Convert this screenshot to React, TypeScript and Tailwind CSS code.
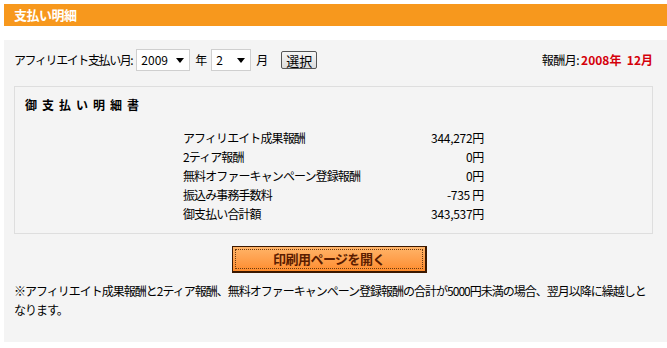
import React from "react";

const font = { fontFamily: '"Noto Sans CJK JP", "Noto Sans", sans-serif' };

function Arrow() {
  return (
    <svg width="8" height="5" viewBox="0 0 8 5" className="block">
      <polygon points="0,0 8,0 4,5" fill="#000" />
    </svg>
  );
}

function FakeSelect({ value, width }: { value: string; width: string }) {
  return (
    <div
      className={`${width} h-[22px] bg-white border border-[#cfcfcf] flex items-center justify-between pl-[4px] pr-[5px] text-[12px] text-black leading-none`}
    >
      <span>{value}</span>
      <Arrow />
    </div>
  );
}

const rows: [string, string][] = [
  ["アフィリエイト成果報酬", "344,272円"],
  ["2ティア報酬", "0円"],
  ["無料オファーキャンペーン登録報酬", "0円"],
  ["振込み事務手数料", "-735 円"],
  ["御支払い合計額", "343,537円"],
];

export default function App() {
  return (
    <div style={font} className="w-[667px] h-[348px] bg-white pt-[4px] pl-[4px] overflow-hidden text-black">
      <div className="h-[22px] bg-[#f7981d] pl-[10px] flex items-center text-white font-bold text-[13px] tracking-[-0.5px]">
        支払い明細
      </div>
      <div className="mt-[14px] h-[302px] bg-[#f4f4f4] pl-[10px] pr-[14px] pt-[9px]">
        <div className="h-[22px] flex items-center justify-between text-[12px]">
          <div className="flex items-center">
            <span className="tracking-[-1.4px]">アフィリエイト支払い月:</span>
            <div className="ml-[4px]">
              <FakeSelect value="2009" width="w-[54px]" />
            </div>
            <span className="ml-[5px]">年</span>
            <div className="ml-[4px]">
              <FakeSelect value="2" width="w-[40px]" />
            </div>
            <span className="ml-[5px]">月</span>
            <button className="ml-[13px] w-[36px] h-[18px] border border-[#555] rounded-[2px] bg-gradient-to-b from-[#f6f6f6] to-[#dcdcdc] text-[13px] leading-none flex items-center justify-center">
              選択
            </button>
          </div>
          <div className="text-[12px] flex items-center">
            <span className="tracking-[-0.5px]">報酬月:</span>
            <span className="text-[#d4000b] font-bold ml-[2px] whitespace-pre">2008年  12月</span>
          </div>
        </div>

        <div className="mt-[15px] h-[148px] border border-[#dedede] pt-[10px] pl-[10px] pb-[9px]">
          <div className="h-[16px] flex items-center font-bold text-[12px] tracking-[5px]">御支払い明細書</div>
          <div className="mt-[15px] flex justify-center pr-[10px]">
            <div className="w-[301px] text-[12px]">
              {rows.map(([label, value]) => (
                <div key={label} className="h-[19px] flex items-center justify-between">
                  <span className="tracking-[-0.9px]">{label}</span>
                  <span className="tracking-[-0.3px]">{value}</span>
                </div>
              ))}
            </div>
          </div>
        </div>

        <div className="mt-[12px] flex justify-center pr-[8px]">
          <div className="w-[195px] h-[27px] border border-[#3b1800] border-r-2 border-b-2 bg-gradient-to-b from-[#ffb468] to-[#ff8c2c] p-[2px]">
            <div className="w-full h-full border border-dotted border-[#6b3a10] flex items-center justify-center text-[13px] font-bold text-[#5a1c00] tracking-[-0.5px]">
              印刷用ページを開く
            </div>
          </div>
        </div>

        <div className="mt-[8px] text-[12px] leading-[19px] tracking-[-1px]">
          <div className="whitespace-nowrap">
            ※アフィリエイト成果報酬と2ティア報酬、無料オファーキャンペーン登録報酬の合計が5000円未満の場合、翌月以降に繰越しと
          </div>
          <div>なります。</div>
        </div>
      </div>
    </div>
  );
}
